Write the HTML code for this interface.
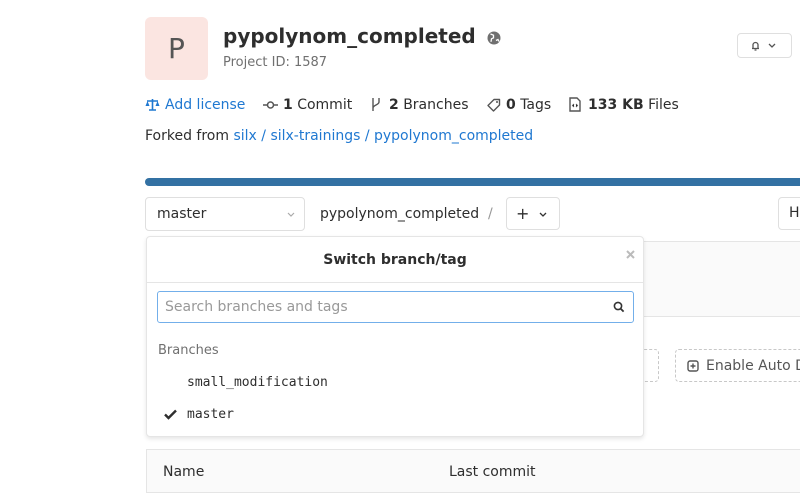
<!DOCTYPE html>
<html><head><style>
*{margin:0;padding:0;box-sizing:border-box}
body{width:800px;height:500px;overflow:hidden;background:#fff;font-family:"DejaVu Sans","Liberation Sans",sans-serif;color:#2e2e2e;position:relative}
.a{position:absolute;white-space:nowrap}
.blue{color:#1f78d1}
.mono{font-family:"DejaVu Sans Mono","Liberation Mono",monospace}
svg.i{position:absolute}
</style></head><body>
<div class="a" style="left:145px;top:17px;width:63px;height:63px;background:#fbe5e1;border-radius:6px;font-size:28px;color:#555;text-align:center;line-height:63px">P</div>
<div class="a" style="left:223px;top:24px;font-size:20px;font-weight:bold;color:#2e2e2e">pypolynom_completed</div>
<svg class="i" style="left:487px;top:31px" width="14" height="14" viewBox="0 0 14 14"><circle cx="7" cy="7" r="6.5" fill="#707070"/><path d="M3.5 3l3 1.2 0 2.6-2 1-0.5 3M9 9.5l2-1 1 2" stroke="#fff" stroke-width="1.3" fill="none"/></svg>
<div class="a" style="left:223px;top:55px;font-size:13px;color:#707070">Project ID: 1587</div>
<div class="a" style="left:737px;top:33px;width:55px;height:25px;border:1px solid #dfdfdf;border-radius:4px;font-size:11px;color:#555;line-height:22px">
<svg class="i" style="left:12px;top:6px" width="11" height="11" viewBox="0 0 11 11"><path d="M2 8.5h7M3 8.5V5a2.5 2.5 0 015 0v3.5M4.5 10h2" stroke="#555" stroke-width="1.3" fill="none"/></svg>
<svg class="i" style="left:30px;top:9px" width="8" height="6" viewBox="0 0 8 6"><path d="M1 1l3 3 3-3" stroke="#555" stroke-width="1.3" fill="none"/></svg></div>
<svg class="i" style="left:145px;top:98px" width="15" height="13" viewBox="0 0 15 13"><path d="M7.5 1v11M2 3h11M4 12h7" stroke="#1f78d1" stroke-width="1.6"/><path d="M0.5 8l2-5 2 5zM10.5 8l2-5 2 5z" fill="#1f78d1"/></svg>
<div class="a blue" style="left:165px;top:97px;font-size:14px">Add license</div>
<svg class="i" style="left:263px;top:100px" width="15" height="10" viewBox="0 0 15 10"><path d="M0 5h4M11 5h4" stroke="#555" stroke-width="1.5"/><circle cx="7.5" cy="5" r="3" stroke="#555" stroke-width="1.5" fill="none"/></svg>
<div class="a" style="left:283px;top:97px;font-size:14px"><b>1</b> Commit</div>
<svg class="i" style="left:371px;top:97px" width="10" height="15" viewBox="0 0 10 15"><path d="M2 1v13M8 1v4c0 3-6 3-6 6" stroke="#555" stroke-width="1.4" fill="none"/></svg>
<div class="a" style="left:389px;top:97px;font-size:14px"><b>2</b> Branches</div>
<svg class="i" style="left:487px;top:98px" width="14" height="14" viewBox="0 0 14 14"><path d="M7 1.5h5.5V7l-6 6-5.5-5.5z" stroke="#555" stroke-width="1.4" fill="none" stroke-linejoin="round"/><circle cx="10" cy="4" r="1" fill="#555"/></svg>
<div class="a" style="left:506px;top:97px;font-size:14px"><b>0</b> Tags</div>
<svg class="i" style="left:569px;top:97px" width="12" height="15" viewBox="0 0 12 15"><path d="M1 1h7l3 3v10H1z" stroke="#555" stroke-width="1.4" fill="none"/><path d="M5 7l-1.5 1.5L5 10M7 7l1.5 1.5L7 10" stroke="#555" stroke-width="1"/></svg>
<div class="a" style="left:588px;top:97px;font-size:14px"><b>133 KB</b> Files</div>
<div class="a" style="left:145px;top:128px;font-size:14px">Forked from <span class="blue">silx / silx-trainings / pypolynom_completed</span></div>
<div class="a" style="left:145px;top:178px;width:660px;height:8px;background:#3371a3;border-radius:4px"></div>
<div class="a" style="left:145px;top:197px;width:160px;height:34px;border:1px solid #dfdfdf;border-radius:4px;font-size:14px;line-height:33px;padding-left:11px">master
<svg class="i" style="left:141px;top:14px" width="8" height="6" viewBox="0 0 8 6"><path d="M1 1l3 3 3-3" stroke="#aaa" stroke-width="1.2" fill="none"/></svg></div>
<div class="a" style="left:320px;top:206px;font-size:14px">pypolynom_completed <span style="color:#999">&nbsp;/</span></div>
<div class="a" style="left:506px;top:197px;width:54px;height:33px;border:1px solid #dfdfdf;border-radius:4px;font-size:16px;line-height:31px;padding-left:9px">+
<svg class="i" style="left:32px;top:14px" width="8" height="6" viewBox="0 0 8 6"><path d="M1 1l3 3 3-3" stroke="#333" stroke-width="1.3" fill="none"/></svg></div>
<div class="a" style="left:778px;top:197px;width:40px;height:33px;border:1px solid #dfdfdf;border-radius:4px;font-size:14px;line-height:31px;padding-left:10px">H</div>
<div class="a" style="left:644px;top:241px;width:160px;height:76px;background:#fafafa;border-top:1px solid #e5e5e5;border-bottom:1px solid #e5e5e5"></div>
<div class="a" style="left:620px;top:349px;width:39px;height:33px;border:1px dashed #c8c8c8;border-radius:4px"></div>
<div class="a" style="left:675px;top:349px;width:140px;height:33px;border:1px dashed #c8c8c8;border-radius:4px;font-size:14px;line-height:33px;padding-left:30px;color:#555">Enable Auto D
<svg class="i" style="left:11px;top:10px" width="12" height="12" viewBox="0 0 12 12"><rect x="1" y="1" width="10" height="10" rx="2" stroke="#555" stroke-width="1.4" fill="none"/><path d="M6 3.5v5M3.5 6h5" stroke="#555" stroke-width="1.4"/></svg></div>
<div class="a" style="left:146px;top:449px;width:660px;height:44px;background:#fafafa;border:1px solid #e5e5e5;font-size:14px;line-height:44px"><span class="a" style="left:16px">Name</span><span class="a" style="left:302px">Last commit</span></div>
<div class="a" style="left:146px;top:236px;width:498px;height:201px;background:#fff;border:1px solid #e5e5e5;border-radius:4px;box-shadow:0 2px 4px rgba(0,0,0,.1)">
<div class="a" style="left:0;width:496px;top:15px;text-align:center;font-size:14px;font-weight:bold">Switch branch/tag</div>
<svg class="i" style="left:479px;top:13px" width="9" height="9" viewBox="0 0 9 9"><path d="M1 1l7 7M8 1l-7 7" stroke="#bbb" stroke-width="2"/></svg>
<div class="a" style="left:0;top:45px;width:496px;height:1px;background:#e5e5e5"></div>
<div class="a" style="left:10px;top:54px;width:477px;height:32px;border:1px solid #73afea;border-radius:3px;font-size:14px;color:#999;line-height:31px;padding-left:7px">Search branches and tags
<svg class="i" style="left:455px;top:9px" width="12" height="12" viewBox="0 0 12 12"><circle cx="5" cy="5" r="3.6" stroke="#333" stroke-width="1.6" fill="none"/><path d="M7.6 7.6l3 3" stroke="#333" stroke-width="1.8"/></svg></div>
<div class="a" style="left:11px;top:106px;font-size:13px;color:#707070">Branches</div>
<div class="a mono" style="left:40px;top:138px;font-size:13px">small_modification</div>
<svg class="i" style="left:17px;top:172px" width="13" height="11" viewBox="0 0 13 11"><path d="M1 5.5l3.5 3.5L12 1.5" stroke="#2e2e2e" stroke-width="2.4" fill="none"/></svg>
<div class="a mono" style="left:40px;top:170px;font-size:13px">master</div>
</div>
</body></html>
